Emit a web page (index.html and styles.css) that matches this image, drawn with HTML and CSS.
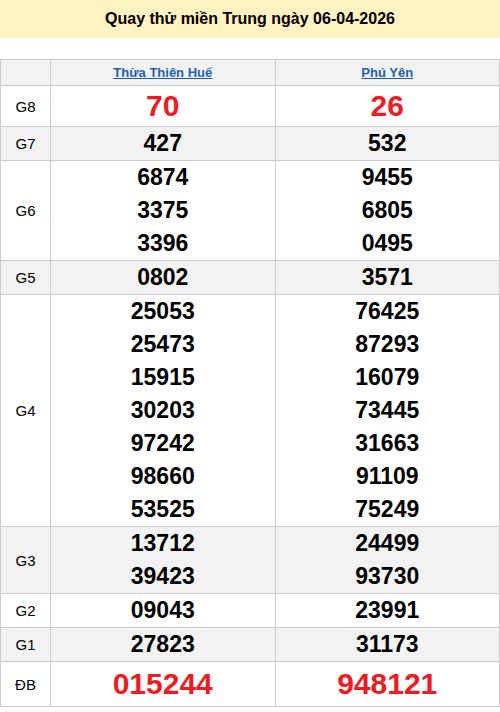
FILE: index.html
```html
<!DOCTYPE html>
<html lang="vi">
<head>
<meta charset="utf-8">
<link rel="stylesheet" href="styles.css">
</head>
<body>
<div class="title">Quay thử miền Trung ngày 06-04-2026</div>
<table class="kq">
  <colgroup><col class="c-label"><col class="c-prov"><col class="c-prov"></colgroup>
  <thead>
    <tr class="alt head"><th></th><th><a href="#">Thừa Thiên Huế</a></th><th><a href="#">Phú Yên</a></th></tr>
  </thead>
  <tbody>
    <tr class="g8"><td class="lbl">G8</td><td><div class="n big red">70</div></td><td><div class="n big red">26</div></td></tr>
    <tr class="alt"><td class="lbl">G7</td><td><div class="n">427</div></td><td><div class="n">532</div></td></tr>
    <tr><td class="lbl">G6</td><td><div class="n">6874</div><div class="n">3375</div><div class="n">3396</div></td><td><div class="n">9455</div><div class="n">6805</div><div class="n">0495</div></td></tr>
    <tr class="alt"><td class="lbl">G5</td><td><div class="n">0802</div></td><td><div class="n">3571</div></td></tr>
    <tr><td class="lbl">G4</td>
      <td><div class="n">25053</div><div class="n">25473</div><div class="n">15915</div><div class="n">30203</div><div class="n">97242</div><div class="n">98660</div><div class="n">53525</div></td>
      <td><div class="n">76425</div><div class="n">87293</div><div class="n">16079</div><div class="n">73445</div><div class="n">31663</div><div class="n">91109</div><div class="n">75249</div></td></tr>
    <tr class="alt"><td class="lbl">G3</td><td><div class="n">13712</div><div class="n">39423</div></td><td><div class="n">24499</div><div class="n">93730</div></td></tr>
    <tr><td class="lbl">G2</td><td><div class="n">09043</div></td><td><div class="n">23991</div></td></tr>
    <tr class="alt"><td class="lbl">G1</td><td><div class="n">27823</div></td><td><div class="n">31173</div></td></tr>
    <tr class="db"><td class="lbl">ĐB</td><td><div class="n big red">015244</div></td><td><div class="n big red">948121</div></td></tr>
  </tbody>
</table>
</body>
</html>
```
FILE: styles.css
```css
html, body {
  margin: 0;
  padding: 0;
  background: #fff;
  font-family: "Liberation Sans", Arial, sans-serif;
  color: #000;
}
.title {
  height: 38px;
  line-height: 38px;
  background: #fff2c2;
  text-align: center;
  font-weight: bold;
  font-size: 16px;
}
.kq {
  margin-top: 21px;
  width: 500px;
  border-collapse: collapse;
  table-layout: fixed;
}
.c-label { width: 50px; }
.kq th, .kq td {
  border: 1px solid #cccccc;
  padding: 0;
  text-align: center;
  vertical-align: middle;
}
.head th {
  height: 25px;
  font-size: 13px;
  font-weight: bold;
}
.head a {
  color: #1f5fb0;
  text-decoration: underline;
}
.alt { background: #f2f2f2; }
.lbl {
  font-size: 15px;
}
.n {
  height: 33px;
  line-height: 33px;
  font-size: 23px;
  font-weight: bold;
}
.big {
  font-size: 30px;
}
.g8 .n { height: 40px; line-height: 40px; }
.db .n { height: 44px; line-height: 44px; }
.red { color: #ed1c24; }
```
